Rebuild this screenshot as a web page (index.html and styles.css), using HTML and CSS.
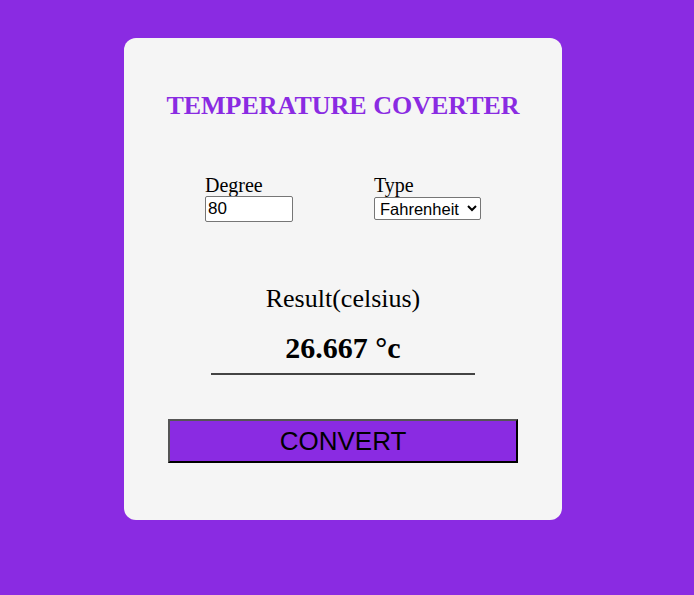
FILE: index.html
```html
<!DOCTYPE html>
<html>
<head>
<meta charset="utf-8">
<link rel="stylesheet" href="styles.css">
</head>
<body>
<div class="card">
  <h2 class="title">TEMPERATURE COVERTER</h2>
  <div class="fields">
    <div class="field field-degree">
      <label class="label">Degree</label>
      <input class="input" type="text" value="80">
    </div>
    <div class="field">
      <label class="label">Type</label>
      <select class="select"><option>Fahrenheit</option><option>Celsius</option></select>
    </div>
  </div>
  <div class="result-label">Result(celsius)</div>
  <div class="result-value">26.667 °c</div>
  <button class="convert">CONVERT</button>
</div>
</body>
</html>
```
FILE: styles.css
```css
html, body {
  margin: 0;
  padding: 0;
}
body {
  background: #8a2be2;
  font-family: "Liberation Serif", "Times New Roman", serif;
  width: 694px;
  height: 595px;
  overflow: hidden;
}
.card {
  width: 438px;
  height: 482px;
  margin: 38px 0 0 124px;
  background: #f5f5f5;
  border-radius: 12px;
  box-sizing: border-box;
  display: flex;
  flex-direction: column;
  align-items: center;
}
.title {
  margin: 53px 0 0 0;
  font-size: 26px;
  line-height: 30px;
  font-weight: bold;
  color: #8a2be2;
}
.fields {
  display: flex;
  align-self: flex-start;
  margin: 54px 0 0 81px;
}
.field {
  display: flex;
  flex-direction: column;
  align-items: flex-start;
}
.field-degree {
  width: 169px;
}
.label {
  font-size: 20px;
  line-height: 21px;
  color: #000;
}
.input {
  width: 88px;
  height: 26px;
  box-sizing: border-box;
  margin: 0;
  padding: 1px 2px;
  border: 1px solid #767676;
  border-radius: 2px;
  font-family: "Liberation Sans", Arial, sans-serif;
  font-size: 17px;
  background: #fff;
}
.select {
  width: 107px;
  height: 23px;
  margin: 1px 0 0 0;
  box-sizing: border-box;
  border: 1px solid #767676;
  border-radius: 2px;
  font-family: "Liberation Sans", Arial, sans-serif;
  font-size: 16.5px;
  background: #fff;
  color: #000;
  padding: 0 1px;
}
.result-label {
  margin-top: 62px;
  font-size: 26px;
  line-height: 30px;
  color: #000;
}
.result-value {
  margin-top: 17px;
  width: 264px;
  text-align: center;
  font-size: 30px;
  line-height: 34px;
  font-weight: bold;
  padding-bottom: 8px;
  border-bottom: 2px solid #444;
}
.convert {
  margin-top: 44px;
  width: 350px;
  height: 44px;
  background: #8a2be2;
  border: 2px outset #767676;
  border-color: #555 #000 #000 #555;
  font-family: "Liberation Sans", Arial, sans-serif;
  font-size: 26px;
  color: #000;
  padding: 0;
}
```
